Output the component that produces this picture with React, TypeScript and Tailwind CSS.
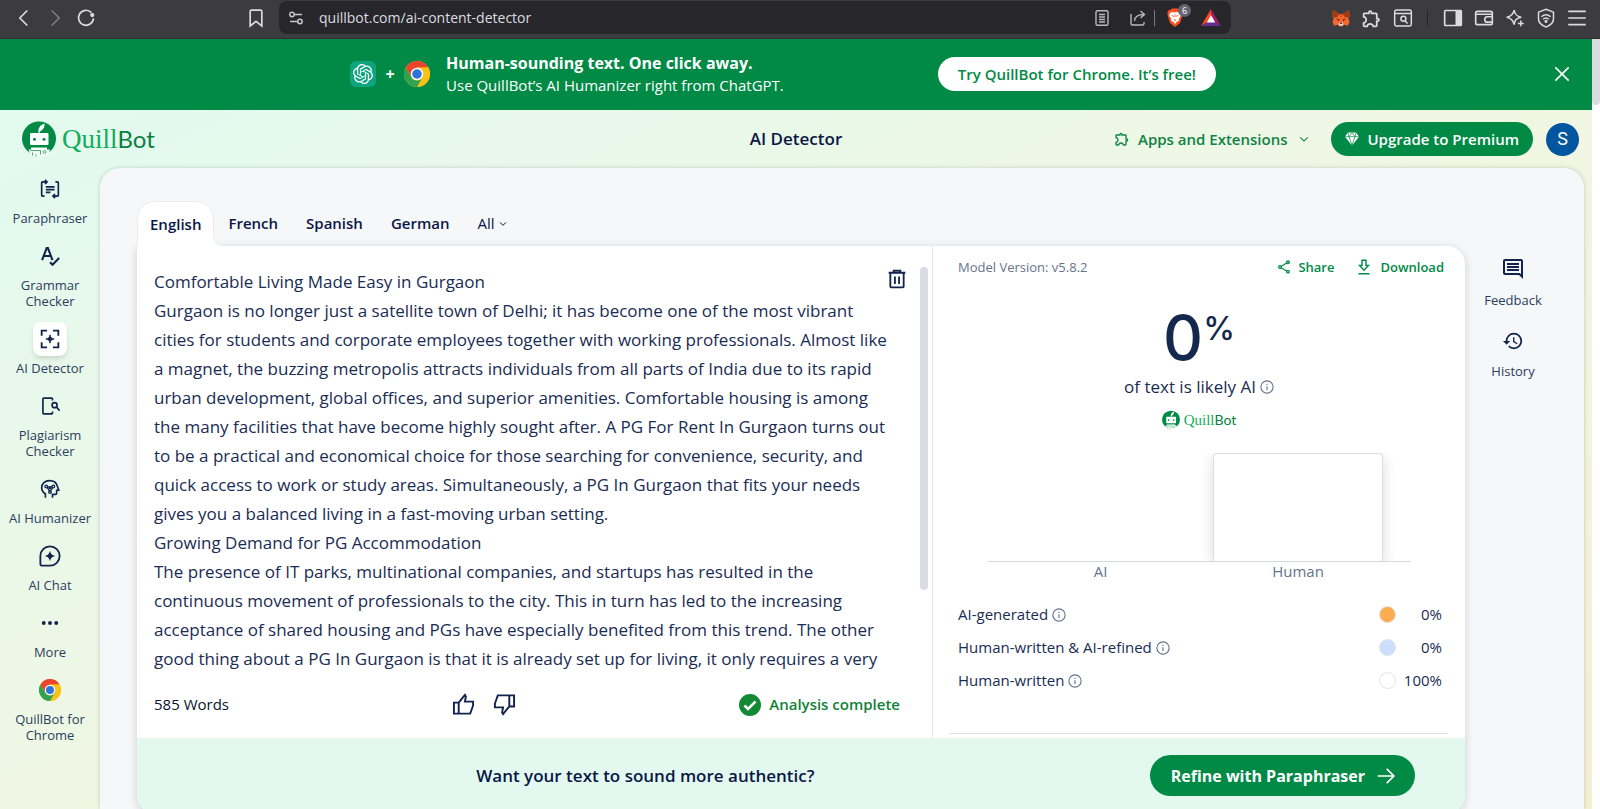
import type { ReactNode } from 'react';
import { MdHistory, MdOutlineExtension, MdOutlineInsertComment, MdOutlineShare } from 'react-icons/md';
import { SiOpenai } from 'react-icons/si';

const ESSAY = `Comfortable Living Made Easy in Gurgaon
Gurgaon is no longer just a satellite town of Delhi; it has become one of the most vibrant cities for students and corporate employees together with working professionals. Almost like a magnet, the buzzing metropolis attracts individuals from all parts of India due to its rapid urban development, global offices, and superior amenities. Comfortable housing is among the many facilities that have become highly sought after. A PG For Rent In Gurgaon turns out to be a practical and economical choice for those searching for convenience, security, and quick access to work or study areas. Simultaneously, a PG In Gurgaon that fits your needs gives you a balanced living in a fast-moving urban setting.
Growing Demand for PG Accommodation
The presence of IT parks, multinational companies, and startups has resulted in the continuous movement of professionals to the city. This in turn has led to the increasing acceptance of shared housing and PGs have especially benefited from this trend. The other good thing about a PG In Gurgaon is that it is already set up for living, it only requires a very`;

const LANGUAGES = ['English', 'French', 'Spanish', 'German'];

const LEGEND = [
  { label: 'AI-generated', value: '0%', dot: 'bg-[#fdac4f]' },
  { label: 'Human-written & AI-refined', value: '0%', dot: 'bg-[#cbdffd]' },
  { label: 'Human-written', value: '100%', dot: 'bg-white' },
];

interface IconProps {
  className?: string;
  children: ReactNode;
  box?: string;
  width?: number;
}

function Stroke({ className = 'size-5', children, box = '0 0 24 24', width = 2 }: IconProps) {
  return (
    <svg viewBox={box} className={className} fill="none" stroke="currentColor" strokeWidth={width} aria-hidden="true">
      {children}
    </svg>
  );
}

function ChromeLogo({ className }: { className: string }) {
  return (
    <svg viewBox="0 0 48 48" className={className} aria-hidden="true">
      <circle cx="24" cy="24" r="24" fill="#fbc116" />
      <path d="M3.2 12A24 24 0 0 1 44.8 12L24 12.5 13.6 30Z" fill="#e9452f" />
      <path d="M44.8 12H24v12l10.4 6L24 48A24 24 0 0 0 44.8 12Z" fill="#fbc116" />
      <path d="M3.2 12 13.6 30A12 12 0 0 0 34.4 30L24 48A24 24 0 0 1 3.2 12Z" fill="#31a350" />
      <circle cx="24" cy="24" r="11.5" fill="#fff" />
      <circle cx="24" cy="24" r="8.8" fill="#2a75dd" />
    </svg>
  );
}

function BotMark({ className }: { className: string }) {
  return (
    <svg viewBox="0 0 34 36" className={className} aria-hidden="true">
      <circle cx="17" cy="17.5" r="17" fill="#008a45" />
      <path d="M16.500 12c-.5-5 1.500-8 6-9.500C23 6 21 9 18 10.500l-.6 1.500Z" fill="#fff" />
      <rect x="8" y="12" width="18.500" height="12" rx="1" fill="#fff" />
      <circle cx="12.500" cy="18.300" r="1.500" fill="#008a45" />
      <circle cx="22" cy="18.300" r="1.500" fill="#008a45" />
      <path d="M9 26.500h16V31H9Z" fill="#fff" />
      <path d="M6.500 28.500h21.500l-1.500 5.500c-5 2.500-13 2.500-18 0Z" fill="#f1fbf5" />
      <path d="M8.500 29.500h10v4M10.500 31.500v3M14 33.500v2" stroke="#4cab78" fill="none" />
      <circle cx="22.500" cy="31" r="1.400" stroke="#4cab78" fill="none" />
    </svg>
  );
}

function InfoIcon() {
  return (
    <Stroke className="size-3.5 shrink-0 text-[#66748c]" box="0 0 16 16" width={1.3}>
      <circle cx="8" cy="8" r="7" />
      <path d="M8 7.200v4.300M8 4.300v1.500" />
    </Stroke>
  );
}

function Sparkle() {
  return <path d="M12 6c.7 3.800 2.200 5.300 6 6-3.800.7-5.300 2.200-6 6-.7-3.800-2.200-5.300-6-6 3.800-.7 5.300-2.200 6-6Z" fill="currentColor" />;
}

const NAV: { label: string; active?: boolean; icon: ReactNode }[] = [
  {
    label: 'Paraphraser',
    icon: (
      <Stroke>
        <path d="M7.500 3.500H3a1 1 0 0 0-1 1v15a1 1 0 0 0 1 1h2.500M16.500 20.500H21a1 1 0 0 0 1-1v-15a1 1 0 0 0-1-1h-2.500M6 1l2.500 2.500L6 6M18 18l-2.500 2.500L18 23M7 9.500h10.500M7 12.800h10.500M7 16h5.500" />
      </Stroke>
    ),
  },
  {
    label: 'Grammar Checker',
    icon: (
      <Stroke width={2.5}>
        <path d="m2.500 17 5.500-14.500h1.500L15 17M4.500 12h8.500M12 19.500l3 3 8-8" />
      </Stroke>
    ),
  },
  {
    label: 'AI Detector',
    active: true,
    icon: (
      <Stroke width={2.2}>
        <path d="M2 8V2h6.500M15.500 2H22v6M22 16v6h-6.500M8.500 22H2v-6" />
        <path d="M12 7c.6 3.300 1.700 4.400 5 5-3.300.6-4.400 1.700-5 5-.6-3.300-1.700-4.400-5-5 3.300-.6 4.400-1.700 5-5Z" fill="currentColor" strokeWidth="1" />
      </Stroke>
    ),
  },
  {
    label: 'Plagiarism Checker',
    icon: (
      <Stroke>
        <path d="M15 5.500V3.500a1 1 0 0 0-1-1H4.500a1 1 0 0 0-1 1v17a1 1 0 0 0 1 1H14a1 1 0 0 0 1-1v-2M20 13.500l3.500 4" />
        <circle cx="17.500" cy="11" r="3" />
      </Stroke>
    ),
  },
  {
    label: 'AI Humanizer',
    icon: (
      <Stroke>
        <path d="M6.500 22.500v-4.500C3.500 16 2 13.500 2 10.500 2 5.500 6 2 11.500 2c5 0 8.500 3 9.500 7l1.500 4.500H20V17a1.500 1.500 0 0 1-1.500 1.500H15v4" />
        <g strokeWidth="1.500">
          <path d="M8.500 9.500h6.500M8.500 10l3.500 5 3.500-5" />
          <circle cx="7.500" cy="9" r="1.600" />
          <circle cx="16" cy="9" r="1.600" />
          <circle cx="12" cy="15.500" r="1.600" />
          <circle cx="12" cy="10.500" r="1.200" />
        </g>
      </Stroke>
    ),
  },
  {
    label: 'AI Chat',
    icon: (
      <Stroke className="size-[22px]">
        <path d="M12 1.500A10.500 10.500 0 1 1 12 22.500H3a1.500 1.500 0 0 1-1.500-1.500v-9A10.500 10.500 0 0 1 12 1.500Z" />
        <g strokeWidth="0">
          <Sparkle />
        </g>
      </Stroke>
    ),
  },
  {
    label: 'More',
    icon: (
      <Stroke>
        <g fill="currentColor" stroke="none">
          <circle cx="4.500" cy="12" r="2.300" />
          <circle cx="12" cy="12" r="2.300" />
          <circle cx="19.500" cy="12" r="2.300" />
        </g>
      </Stroke>
    ),
  },
  { label: 'QuillBot for Chrome', icon: <ChromeLogo className="size-[22px]" /> },
];

function BarButton({ label, children }: { label: string; children: ReactNode }) {
  return (
    <button aria-label={label} className="flex h-9 w-[31px] shrink-0 items-center justify-center">
      {children}
    </button>
  );
}

function BrowserBar() {
  return (
    <div className="flex h-[39px] shrink-0 items-start border-b border-[#2f2b33] bg-[#3c3b40] px-2 text-[#dcdce0]">
      <BarButton label="Back">
        <Stroke className="size-5"><path d="m16 3-9 9 9 9" /></Stroke>
      </BarButton>
      <BarButton label="Forward">
        <Stroke className="size-5 text-[#7d7c82]"><path d="m8 3 9 9-9 9" /></Stroke>
      </BarButton>
      <BarButton label="Reload">
        <Stroke className="size-5">
          <path d="M21 12.500a9 9 0 1 1-2.500-7" />
          <circle cx="19.500" cy="8.500" r="2.500" fill="currentColor" stroke="none" />
        </Stroke>
      </BarButton>
      <div className="ml-[139px]">
        <BarButton label="Bookmark this tab">
          <Stroke className="size-5"><path d="M5 4a1.500 1.500 0 0 1 1.500-1.500h11A1.500 1.500 0 0 1 19 4v17.500l-7-5.500-7 5.500Z" /></Stroke>
        </BarButton>
      </div>
      <div className="mt-px ml-2 mr-[94px] flex h-[33px] min-w-0 flex-1 items-center rounded-lg bg-[#27262b] pr-2 pl-[9px]">
        <Stroke className="size-4 shrink-0 text-[#c6c6cb]" box="0 0 16 16" width={1.5}>
          <circle cx="4" cy="4.500" r="2.200" />
          <path d="M6.500 4.500H14M2 11.500h7.500" />
          <circle cx="12" cy="11.500" r="2.200" />
        </Stroke>
        <input
          aria-label="Address"
          defaultValue="quillbot.com/ai-content-detector"
          className="ml-[15px] min-w-0 flex-1 bg-transparent text-sm text-[#dcdce0] outline-none"
        />
        <button aria-label="Reader mode" className="mr-5">
          <Stroke className="size-4 text-[#b9b9be]" box="0 0 16 16" width={1.4}>
            <rect x="2" y=".8" width="12" height="14.400" rx="1.500" />
            <path d="M5 4.500h6M5 7h6M5 9.500h6M5 12h6" />
          </Stroke>
        </button>
        <button aria-label="Share page" className="mr-2">
          <Stroke className="size-4 text-[#b9b9be]" box="0 0 16 16" width={1.4}>
            <path d="M1 4v9.500a1.500 1.500 0 0 0 1.500 1.500h10a1.500 1.500 0 0 0 1.500-1.500V12M4.500 11c0-4 3-6.500 9.500-6.500M10.500 1 14.500 4.500 10.500 8" />
          </Stroke>
        </button>
        <span className="h-4 w-px bg-[#77777d]" />
        <button aria-label="Brave Shields" className="relative ml-3">
          <svg viewBox="0 0 16 19" className="h-[19px] w-4" aria-hidden="true">
            <path d="M5 .5h6l1.500 1.500 1.500-.3L15.800 4.500l-.5 1 .2 1.500L13 15l-5 4-5-4L.5 7l.2-1.500-.5-1L2 1.700l1.500.3Z" fill="#fb501e" />
            <path d="m3 5 2.500-1L8 4.500l2.500-.5L13 5l.8 2.500-2 3.500.2 1.500L9.500 14 8 16l-1.500-2L4 12.500 4.200 11l-2-3.500Z" fill="#fff" />
            <path d="m4 7 3 .8-.5 1.200ZM12 7l-3 .8.5 1.200ZM6.500 11.500h3L8 13ZM7.700 6h.6l.2 3h-1Z" fill="#fb501e" />
          </svg>
          <span className="absolute -top-1 -right-2 flex size-[13px] items-center justify-center rounded-full bg-[#636472] text-[9px] leading-none text-white">
            6
          </span>
        </button>
        <button aria-label="Brave Rewards" className="ml-[18px] mr-0.5">
          <svg viewBox="0 0 20 17" className="h-[17px] w-5" aria-hidden="true">
            <path d="M10 0 0 17l6.500-4L10 7Z" fill="#ff4724" />
            <path d="M10 0v7l3.500 6 6.500 4Z" fill="#9e1f63" />
            <path d="m0 17 6.500-4h7l6.500 4Z" fill="#662d91" />
            <path d="m10 6 4.200 7.500H5.800Z" fill="#fff" />
          </svg>
        </button>
      </div>
      <BarButton label="MetaMask">
        <svg viewBox="0 0 18 17" className="size-[18px]" aria-hidden="true">
          <path d="m1 .5 6 4h4l6-4 .6 6-1.100 3 1 3-1.500 3.800-4-1-2 1.700H8l-2-1.700-4 1-1.500-3.800 1-3-1.100-3Z" fill="#f5672b" />
          <path d="m1 .5 6 4-1.500 3L1 8.500.4 6.500Zm16 0-6 4 1.500 3L17 8.500l.6-2Z" fill="#a33a14" />
          <path d="m7 4.500 2 5 2-5Z" fill="#e2521d" />
          <path d="m4 9 3.500 1-1 1.500Zm10 0-3.500 1 1 1.500Z" fill="#3a2b33" />
          <path d="M7 13.300h4l.5 2-1 1h-3l-1-1Z" fill="#e3d3ca" />
          <path d="M7.800 13.300h2.400l-.5 1.200H8.300Z" fill="#2d2a33" />
        </svg>
      </BarButton>
      <BarButton label="Extensions">
        <MdOutlineExtension className="size-[21px]" />
      </BarButton>
      <BarButton label="Search tabs">
        <Stroke className="size-5" width={1.8}>
          <rect x="2" y="2.500" width="20" height="19" rx="2" />
          <path d="M2 6.500h20M14.500 15.500l3 3" />
          <circle cx="12.500" cy="13" r="3" />
        </Stroke>
      </BarButton>
      <span className="mx-[9px] mt-2.5 h-4 w-px shrink-0 bg-[#242329]" />
      <BarButton label="Sidebar">
        <Stroke className="size-5">
          <rect x="2" y="3" width="20" height="18" rx="1" />
          <path d="M15 3h7v18h-7Z" fill="currentColor" stroke="none" />
        </Stroke>
      </BarButton>
      <BarButton label="Wallet">
        <Stroke className="size-5">
          <path d="M22 8V6a2 2 0 0 0-2-2H4a2 2 0 0 0-2 2v12a2 2 0 0 0 2 2h16a2 2 0 0 0 2-2v-1M2 7.500h18.500a1.500 1.500 0 0 1 1.500 1.500v8h-6a3 3 0 0 1-3-3v-.5a3 3 0 0 1 3-3h6" />
        </Stroke>
      </BarButton>
      <BarButton label="Leo AI">
        <Stroke className="size-5" width={1.8}>
          <path d="M11 2.500c1 5.500 3 7.500 8.500 8.500-3 .5-5 1.500-6.500 3-1 1.500-1.500 3-2 6-1-5.500-3.500-8-9-9 5.500-1 8-3 9-8.500ZM19 15v7M15.500 18.500h7" />
        </Stroke>
      </BarButton>
      <BarButton label="VPN">
        <Stroke className="size-5" width={1.8}>
          <path d="M12 1.500 21 5v8c0 4.500-4 8-9 10-5-2-9-5.500-9-10V5Z" />
          <path d="M6.500 10.500c3.500-3 7.500-3 11 0M8.500 13.500c2-1.800 5-1.800 7 0" />
          <circle cx="12" cy="16" r="1" fill="currentColor" />
        </Stroke>
      </BarButton>
      <BarButton label="Menu">
        <Stroke className="size-5"><path d="M1.500 4h21M1.500 12h21M1.500 20h21" /></Stroke>
      </BarButton>
    </div>
  );
}

function PromoBanner() {
  return (
    <div className="flex h-[71px] shrink-0 items-center bg-[#008a45] pr-[22px] pb-px pl-3 text-white">
      <div className="flex flex-1 items-center justify-center">
        <span className="flex size-[26px] items-center justify-center rounded-md bg-[#10a37f]">
          <SiOpenai className="size-5" />
        </span>
        <span className="w-7 text-center text-base font-bold">+</span>
        <ChromeLogo className="size-[26px]" />
        <div className="ml-4">
          <p className="text-base leading-[22px] font-bold">Human-sounding text. One click away.</p>
          <p className="text-[15px] leading-[22px]">Use QuillBot’s AI Humanizer right from ChatGPT.</p>
        </div>
        <button className="ml-[154px] h-[34px] rounded-full bg-white px-5 text-[15px] font-semibold text-[#008a45]">
          Try QuillBot for Chrome. It’s free!
        </button>
      </div>
      <button aria-label="Close banner">
        <Stroke className="size-4" width={2.4}><path d="m2 2 20 20M22 2 2 22" /></Stroke>
      </button>
    </div>
  );
}

function Header() {
  return (
    <header className="grid h-[58px] shrink-0 grid-cols-[1fr_auto_1fr] items-center px-[13px]">
      <a href="#home" className="ml-[9px] flex items-center gap-1.5" aria-label="QuillBot">
        <BotMark className="h-9 w-[34px]" />
        <span className="flex items-baseline">
          <span className="font-['Liberation_Serif',serif] text-[27px] leading-8 text-[#12ad5c]">Quill</span>
          <span className="font-[Lato,sans-serif] text-2xl leading-8 text-[#0a8040]">Bot</span>
        </span>
      </a>
      <h1 className="text-[17px] font-semibold text-[#0a1746]">AI Detector</h1>
      <div className="flex items-center justify-end">
        <button className="flex items-center text-[15px] font-semibold text-[#118245]">
          <MdOutlineExtension className="mr-2 size-4" />
          Apps and Extensions
          <Stroke className="ml-3 size-2.5" width={2.6}><path d="m3 8 9 9 9-9" /></Stroke>
        </button>
        <button className="ml-[22px] flex h-[34px] items-center gap-2 rounded-full bg-[#008a45] px-3.5 text-[15px] font-semibold text-white">
          <svg viewBox="0 0 24 24" className="size-3.5" aria-hidden="true">
            <path d="M5 1h14l5 7-12 15L0 8Z" fill="#fff" />
            <path d="M0 8h24M7 8l5 15 5-15M5 1l2 7 5-7 5 7 2-7" fill="none" stroke="#008a45" strokeWidth="1.200" />
          </svg>
          Upgrade to Premium
        </button>
        <button aria-label="Account" className="ml-[13px] size-[33px] rounded-full bg-[#02569f] font-[Roboto,sans-serif] text-lg text-white">
          S
        </button>
      </div>
    </header>
  );
}

function Sidebar() {
  return (
    <nav className="flex w-[100px] shrink-0 flex-col gap-[13px] pt-1 text-[#12244d]" aria-label="Tools">
      {NAV.map((item) => (
        <a key={item.label} href="#tool" className="flex flex-col items-center gap-1">
          <span className={`flex size-[34px] items-center justify-center ${item.active ? 'rounded-lg bg-white shadow-md' : ''}`}>{item.icon}</span>
          <span className="w-[84px] text-center text-[13px] leading-4 text-[#2c3d5e]">{item.label}</span>
        </a>
      ))}
    </nav>
  );
}

function LanguageTabs() {
  return (
    <div className="flex h-[45px] items-stretch text-[15px] font-semibold text-[#0a1746]" role="tablist" aria-label="Language">
      {LANGUAGES.map((lang, i) => (
        <button
          key={lang}
          role="tab"
          aria-selected={i === 0}
          className={i === 0 ? 'relative rounded-t-[18px] border-x border-t border-[#ececf0] bg-white px-3' : 'px-3.5'}
        >
          {lang}
          {i === 0 && (
            <svg viewBox="0 0 10 10" className="absolute -right-[10px] bottom-0 size-2.5" aria-hidden="true">
              <path d="M0 0c0 6 4 10 10 10H0Z" fill="#fff" />
            </svg>
          )}
        </button>
      ))}
      <button className="flex items-center gap-1 px-3.5 font-medium">
        All
        <Stroke className="size-2" width={3}><path d="m3 7 9 9 9-9" /></Stroke>
      </button>
    </div>
  );
}

function Editor() {
  return (
    <section className="flex min-w-0 flex-1 flex-col pt-[21px] pr-1 pl-[17px]">
      <div className="relative flex items-start justify-between">
        <textarea
          aria-label="Text to analyse"
          rows={14}
          defaultValue={ESSAY}
          spellCheck={false}
          className="w-[742px] resize-none overflow-hidden bg-transparent text-[17px] leading-[29px] text-[#1a2c54] outline-none"
        />
        <button aria-label="Delete text" className="absolute top-0.5 right-[21px] text-[#12244d]">
          <Stroke className="size-5" width={2.2}>
            <path d="M2 4.500h20M8 4V2h8v2M4 5v16a1 1 0 0 0 1 1h14a1 1 0 0 0 1-1V5M9.500 9v9M14.500 9v9" />
          </Stroke>
        </button>
        <span className="h-[323px] w-2 rounded-full bg-[#dadce3]" />
      </div>
      <div className="mt-5 flex items-center justify-between pr-7 text-[15px] font-semibold">
        <span className="font-medium text-[#0a1230]">585 Words</span>
        <div className="flex gap-[18px] text-[#12244d]">
          <button aria-label="Like">
            <Stroke className="size-[23px]">
              <path d="M2 10h5v11.500H2ZM7 10l6.500-8L14.500 3.500 13.500 9H22v4l-3 8.500H7" />
            </Stroke>
          </button>
          <button aria-label="Dislike">
            <Stroke className="size-[23px]">
              <path d="M22 2.500h-5V14h5ZM17 14l-6.500 8L9.500 20.500 10.500 15H2v-4l3-8.500h12" />
            </Stroke>
          </button>
        </div>
        <span className="flex items-center gap-2 text-[#128238]">
          <svg viewBox="0 0 22 22" className="size-[22px]" aria-hidden="true">
            <circle cx="11" cy="11" r="11" fill="#128a35" />
            <path d="m5.500 11.500 3.500 3.500 7.500-7.500" fill="none" stroke="#fff" strokeWidth="2.500" />
          </svg>
          Analysis complete
        </span>
      </div>
    </section>
  );
}

function Results() {
  return (
    <section className="flex w-[533px] shrink-0 flex-col border-l border-[#e6e7eb] px-[17px] pt-3">
      <div className="flex items-center pr-1 pl-2 text-[13px] leading-[18px]">
        <span className="flex-1 text-[#66748c]">Model Version: v5.8.2</span>
        <button className="flex items-center gap-1.5 font-semibold text-[#008a45]">
          <MdOutlineShare className="size-4" /> Share
        </button>
        <button className="ml-5.5 flex items-center gap-2 font-semibold text-[#008a45]">
          <Stroke className="size-4" box="2 2 20 20" width={1.8}>
            <path d="M9.500 3.500h5v6.500h3L12 16l-5.500-6h3ZM5 20.500h14" />
          </Stroke>
          Download
        </button>
      </div>

      <div className="mt-[27px] flex items-start justify-center font-[Inter,sans-serif] text-[#14284d]">
        <span className="text-[62px] leading-[70px] font-medium">0</span>
        <span className="text-[32px] leading-[52px] font-medium">%</span>
      </div>
      <p className="mt-[2px] flex items-center justify-center gap-1 text-[17px] leading-6 text-[#1a2c54]">
        of text is likely AI <InfoIcon />
      </p>
      <div className="mt-[11px] flex items-center justify-center gap-1">
        <BotMark className="h-5 w-[18px]" />
        <span className="flex items-baseline">
          <span className="font-['Liberation_Serif',serif] text-[15px] leading-5 text-[#12ad5c]">Quill</span>
          <span className="font-[Lato,sans-serif] text-[14px] leading-5 text-[#0a8040]">Bot</span>
        </span>
      </div>

      <div className="mr-[37px] ml-[38px] mt-[23px]">
        <div className="flex h-[109px] items-end justify-end overflow-hidden border-b border-[#d5d8e0] pr-7">
          <div className="h-full w-[170px] rounded-t border-x border-t border-[#dcdde1] bg-white shadow-[0_4px_14px_rgba(0,0,0,0.14)]" />
        </div>
        <div className="flex text-[15px] leading-[18px] text-[#66748c]">
          <span className="flex-1 text-center">AI</span>
          <span className="mr-7 w-[170px] text-center">Human</span>
        </div>
      </div>

      <ul className="mt-[18px] flex flex-1 flex-col pr-1.5 pl-2 text-[15px] text-[#1a2c54]">
        {LEGEND.map((row) => (
          <li key={row.label} className="flex h-[33px] items-center">
            <span className="mr-1">{row.label}</span>
            <InfoIcon />
            <span className={`ml-auto size-[17px] rounded-full border border-[#e3e4e8] ${row.dot}`} />
            <span className="w-[46px] text-right font-medium">{row.value}</span>
          </li>
        ))}
      </ul>
      <hr className="mb-1 border-[#dedfe3]" />
    </section>
  );
}

function RefineBar() {
  return (
    <div className="flex h-[75px] shrink-0 items-center justify-end rounded-b-[18px] bg-[#e3f9f0] pr-[50px]">
      <p className="flex-1 pl-1 text-center text-[17px] font-semibold text-[#0a1746]">Want your text to sound more authentic?</p>
      <button className="flex h-[41px] items-center gap-3 rounded-full bg-[#008a45] pr-5 pl-[21px] text-base font-bold text-white">
        Refine with Paraphraser
        <Stroke className="size-[18px]" width={2.3}><path d="M1 12h21M13 2.500l9.500 9.500-9.500 9.500" /></Stroke>
      </button>
    </div>
  );
}

function SideActions() {
  return (
    <div className="flex w-24 flex-col items-center gap-[22px] pt-14 text-[13px] text-[#2c3d5e]">
      <button className="flex flex-col items-center gap-[11px] leading-4">
        <MdOutlineInsertComment className="size-6 text-[#12244d]" /> Feedback
      </button>
      <button className="flex flex-col items-center gap-[11px] leading-4">
        <MdHistory className="size-[22px] text-[#12244d]" /> History
      </button>
    </div>
  );
}

export default function App() {
  return (
    <div className="flex h-screen flex-col overflow-hidden bg-white font-['Open_Sans',sans-serif]">
      <BrowserBar />
      <div className="flex min-h-0 flex-1">
        <div className="flex min-w-0 flex-1 flex-col bg-linear-to-br from-[#e1faf0] via-[#eff7e4] to-[#f5efd4]">
          <PromoBanner />
          <Header />
          <div className="flex min-h-0 flex-1">
            <Sidebar />
            <main className="mr-2 flex min-w-0 flex-1 rounded-t-[20px] bg-[#f6f7f9] pt-[33px] pr-[23px] pl-[37px] shadow-[0_0_4px_rgba(0,0,0,0.18)]">
              <div className="min-w-0 flex-1">
                <LanguageTabs />
                <div className="flex flex-col rounded-tr-[18px] rounded-b-[18px] bg-white shadow-[0_2px_10px_rgba(0,0,0,0.16)]">
                  <div className="flex h-[492px]">
                    <Editor />
                    <Results />
                  </div>
                  <RefineBar />
                </div>
              </div>
              <SideActions />
            </main>
          </div>
        </div>
        {/* page scrollbar */}
        <div className="w-2 shrink-0">
          <div className="h-[66px] rounded-b-full bg-[#dadce3]" />
        </div>
      </div>
    </div>
  );
}
